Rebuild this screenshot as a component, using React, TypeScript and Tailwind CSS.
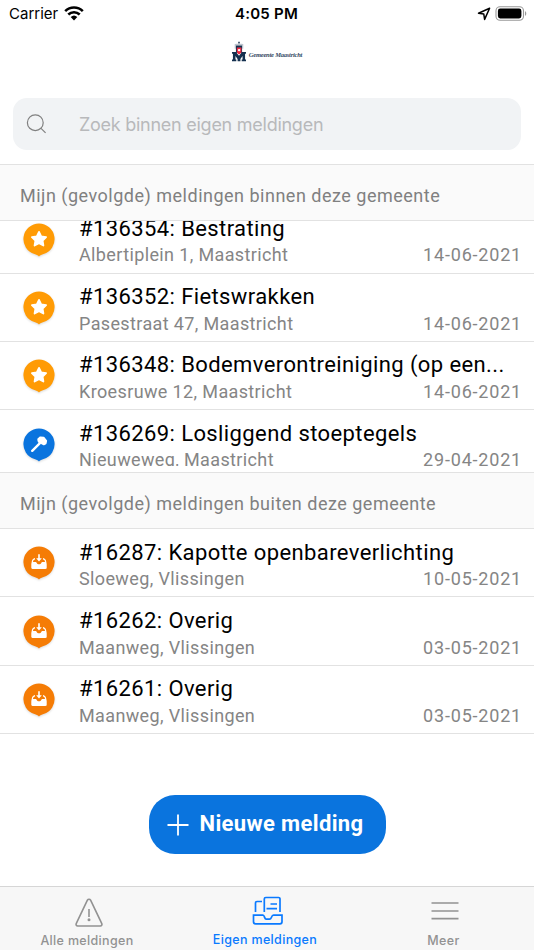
import React from 'react';

type PinKind = 'star' | 'hammer' | 'inbox';

interface Report {
  id: number;
  title: string;
  address: string;
  date: string;
  kind: PinKind;
}

const insideReports: Report[] = [
  { id: 136354, title: 'Bestrating', address: 'Albertiplein 1, Maastricht', date: '14-06-2021', kind: 'star' },
  { id: 136352, title: 'Fietswrakken', address: 'Pasestraat 47, Maastricht', date: '14-06-2021', kind: 'star' },
  { id: 136348, title: 'Bodemverontreiniging (op een...', address: 'Kroesruwe 12, Maastricht', date: '14-06-2021', kind: 'star' },
  { id: 136269, title: 'Losliggend stoeptegels', address: 'Nieuweweg, Maastricht', date: '29-04-2021', kind: 'hammer' },
];

const outsideReports: Report[] = [
  { id: 16287, title: 'Kapotte openbareverlichting', address: 'Sloeweg, Vlissingen', date: '10-05-2021', kind: 'inbox' },
  { id: 16262, title: 'Overig', address: 'Maanweg, Vlissingen', date: '03-05-2021', kind: 'inbox' },
  { id: 16261, title: 'Overig', address: 'Maanweg, Vlissingen', date: '03-05-2021', kind: 'inbox' },
];

const pinColors: Record<PinKind, string> = {
  star: '#ff9b05',
  hammer: '#0a74de',
  inbox: '#f57c05',
};

const Pin: React.FC<{ kind: PinKind }> = ({ kind }) => (
  <svg width="36" height="38" viewBox="0 0 36 38" className="shrink-0 drop-shadow-[0_1px_1px_rgba(0,0,0,0.15)]">
    <path
      d="M18 1.5a15.6 15.6 0 0 1 4.6 30.5c-2 .6-3.200 1-4.600 2.400-1.400-1.400-2.600-1.800-4.600-2.400A15.600 15.600 0 0 1 18 1.500z"
      fill={pinColors[kind]}
    />
    {kind === 'star' && (
      <path
        d="M18 9.900l2.200 4.500 4.900.7-3.500 3.500.8 4.900-4.400-2.300-4.400 2.300.8-4.900-3.500-3.500 4.900-.7z"
        fill="#fff"
        stroke="#fff"
        strokeWidth="1.800"
        strokeLinejoin="round"
      />
    )}
    {kind === 'hammer' && (
      <g stroke="#fff" strokeLinecap="round" strokeLinejoin="round">
        <path d="M11.200 23.800l7.500-7.500" strokeWidth="2.400" />
        <path d="M17.200 12.200l2.200-1.900 3.200.3 2.600 3.200-.5 2.600-1.900 1-1.800-1-2.400-.8-1.200-1.600z" fill="#fff" strokeWidth="1.800" />
      </g>
    )}
    {kind === 'inbox' && (
      <g fill="#fff">
        <path d="M17.200 9.300h1.600v4h2L18 16.500l-2.800-3.200h2z" />
        <path d="M14 12.900v1.600c-1.300.3-1.800 1.200-2 2.500h2.500c.7 0 .9.300 1.200 1 .4.900 1.100 1.300 2.300 1.300s1.900-.4 2.300-1.300c.3-.7.5-1 1.200-1H24c-.2-1.300-.7-2.200-2-2.500v-1.600c2 .4 2.800 1.700 3.100 3.200l.6 2.900v3.700c0 .8-.5 1.200-1.200 1.200h-13c-.7 0-1.200-.4-1.200-1.200V19l.6-2.900c.3-1.500 1.100-2.800 3.100-3.200z" />
      </g>
    )}
  </svg>
);

const ReportRow: React.FC<{ report: Report }> = ({ report }) => (
  <div className="flex h-[68.400px] shrink-0 border-b border-[#e2e2e2] pr-[12px] pl-[21px]">
    <div className="pt-[16.400px]">
      <Pin kind={report.kind} />
    </div>
    <div className="min-w-0 flex-1 pt-[8.500px] pl-[22px]">
      <div className="text-[22px] leading-[30px] tracking-[0.400px] whitespace-nowrap text-black">
        #{report.id}: {report.title}
      </div>
      <div className="-mt-[0.400px] flex justify-between text-[18px] leading-6 tracking-[0.370px] whitespace-nowrap text-[#858585]">
        <span>{report.address}</span>
        <span className="tracking-[0.800px]">{report.date}</span>
      </div>
    </div>
  </div>
);

const SectionHeader: React.FC<{ title: string }> = ({ title }) => (
  <div className="h-[57px] shrink-0 border-y border-[#e2e2e2] bg-[#fafafa] pt-[19px] pl-5 text-[18px] leading-6 tracking-[0.500px] text-[#808080]">
    {title}
  </div>
);

const StatusBar: React.FC = () => (
  <div className="grid h-7 shrink-0 grid-cols-3 items-center pr-[7px] pl-[9px] font-['Inter',sans-serif] text-[15px] text-black">
    <div className="flex items-center gap-[6px]">
      <span>Carrier</span>
      <svg width="20" height="16" viewBox="0 0 20 16">
        <g fill="none" stroke="#000" strokeWidth="2.600">
          <path d="M1.200 5.100a12.600 12.600 0 0 1 17.600 0" />
          <path d="M4.300 8.500a8.200 8.200 0 0 1 11.400 0" />
        </g>
        <path d="M10 14.500l3.300-3.400a4.800 4.800 0 0 0-6.600 0z" />
      </svg>
    </div>
    <div className="-ml-[3px] text-center font-semibold tracking-[0.250px]">4:05 PM</div>
    <div className="flex items-center justify-end gap-[4px]">
      <svg width="14" height="14" viewBox="0 0 14 14">
        <path d="M12.600 1.300L1.500 6.200l5.300.9.800 5.300z" fill="none" stroke="#000" strokeWidth="1.500" strokeLinejoin="round" />
      </svg>
      <svg width="32" height="15" viewBox="0 0 32 15" className="-mt-[2px]">
        <rect x="1" y=".7" width="27.500" height="13.600" rx="4" fill="none" stroke="#999" strokeWidth="1.100" />
        <rect x="2.900" y="2.600" width="23.500" height="9.800" rx="2.300" />
        <path d="M30 5.200c1.700.7 1.700 3.900 0 4.600z" fill="#999" />
      </svg>
    </div>
  </div>
);

const Logo: React.FC = () => (
  <div className="flex h-[70px] shrink-0 items-start justify-center gap-[3px] pt-[13px]">
    <svg width="14" height="21" viewBox="0 0 15 21">
      <g fill="#14304f">
        <path d="M0 11h4.200L7.500 15 10.800 11H15v1.800h-1v6.400h1V21h-4.600v-1.800h.9v-4L9 18.600V21H6v-2.400l-2.300-3.400v4h.9V21H0v-1.800h1v-6.400H0z" />
        <path d="M4.200 4h6.600v8H4.200z" />
        <path d="M6.700 0h1.600v2H6.700z" />
      </g>
      <path d="M3.500 2.500v5M11.500 2.500v5M4 2.800h7" stroke="#a9b3bf" fill="none" />
      <path d="M5.200 6.200h4.900v4.300c0 1.700-1.300 2.500-2.500 3-1.200-.5-2.400-1.300-2.400-3z" fill="#ee2a42" />
      <circle cx="7.600" cy="9" r="1.300" fill="#fff" />
    </svg>
    <span className="pt-[9px] font-['Liberation_Serif',serif] text-[6.500px] leading-[10px] font-bold tracking-[-0.220px] whitespace-nowrap text-[#33475f] italic">
      Gemeente Maastricht
    </span>
  </div>
);

const TabBar: React.FC = () => (
  <nav className="flex h-[64px] shrink-0 border-t border-[#d6d6d6] bg-[#f7f7f7] font-['Inter',sans-serif] text-[12.500px] leading-4 font-medium tracking-[0.340px] text-[#929292]">
    <div className="flex w-[174px] flex-col items-center pt-[11px]">
      <svg width="30" height="30" viewBox="0 0 30 30" fill="none" stroke="currentColor" strokeWidth="1.600" className="ml-[4px]">
        <path d="M13.400 2.200a1.800 1.800 0 0 1 3.200 0l11.200 23.500a1.600 1.600 0 0 1-1.500 2.300H3.700a1.600 1.600 0 0 1-1.500-2.300z" />
        <path d="M15 11v8" />
        <circle cx="15" cy="21.800" r=".7" fill="currentColor" />
      </svg>
      <span className="pt-[5px]">Alle meldingen</span>
    </div>
    <div className="flex w-[182px] flex-col items-center pt-[9px] text-[#0a7aff]">
      <svg width="32" height="30" viewBox="0 0 32 30" fill="none" stroke="currentColor" strokeWidth="1.700" className="ml-[5px]">
        <path d="M3.500 16V7A1.500 1.500 0 0 1 5 5.500h5M12.300 16V3a1.500 1.500 0 0 1 1.500-1.500h12.700A1.500 1.500 0 0 1 28 3v13M18.500 8h6.500M14.500 12.700H25" />
        <path d="M1.500 19.200h9.500c1.800 0 1.200 4 3.200 4h3.300c2.500 0 1.500-4 4-4H30v6.600a2 2 0 0 1-2 2H3.500a2 2 0 0 1-2-2z" />
      </svg>
      <span className="pt-[6px]">Eigen meldingen</span>
    </div>
    <div className="flex flex-1 flex-col items-center pt-[14px]">
      <svg width="28" height="22" viewBox="0 0 28 22" fill="none" stroke="currentColor" strokeWidth="1.700">
        <path d="M.5 2h27M.5 10h27M.5 17.700h27" />
      </svg>
      <span className="mr-[3px] pt-[10px]">Meer</span>
    </div>
  </nav>
);

const App: React.FC = () => {
  return (
    <div className="flex h-[950px] w-[534px] flex-col overflow-hidden bg-white font-['Roboto',sans-serif]">
      <StatusBar />
      <Logo />

      <div className="mx-[13px] flex h-[52px] shrink-0 items-center rounded-[14px] bg-[#f1f3f5] pl-[13px]">
        <svg width="22" height="22" viewBox="0 0 22 22" fill="none" stroke="#808080" strokeWidth="1.200">
          <circle cx="9.300" cy="9.700" r="7.900" />
          <path d="M15 15.300l4.600 4.600" />
        </svg>
        <span className="pl-[31px] font-['Inter',sans-serif] text-[18px] tracking-[-0.260px] text-[#b8b9bb]">
          Zoek binnen eigen meldingen
        </span>
      </div>

      <div className="mt-[14px] flex shrink-0 flex-col">
        <SectionHeader title="Mijn (gevolgde) meldingen binnen deze gemeente" />
        {/* this list is scrolled down a little, so the first row is cut off */}
        <div className="flex h-[245px] flex-col overflow-hidden">
          <div className="-mt-[15.800px]">
            {insideReports.map((report) => (
              <ReportRow key={report.id} report={report} />
            ))}
          </div>
        </div>
      </div>

      <div className="mt-[6px] flex shrink-0 flex-col">
        <SectionHeader title="Mijn (gevolgde) meldingen buiten deze gemeente" />
        {outsideReports.map((report) => (
          <ReportRow key={report.id} report={report} />
        ))}
      </div>

      <div className="flex flex-1 items-start justify-center pt-[61px]">
        <button className="flex h-[59px] w-[237px] items-center rounded-[26px] bg-[#0a74de] pl-[18px] text-[22px] font-bold tracking-[0.360px] whitespace-nowrap text-white">
          <svg width="22" height="22" viewBox="0 0 22 22" stroke="#fff" strokeWidth="1.800">
            <path d="M11 .5v21M.5 11h21" />
          </svg>
          <span className="-mt-[2px] pl-[11px]">Nieuwe melding</span>
        </button>
      </div>

      <TabBar />
    </div>
  );
};

export default App;
